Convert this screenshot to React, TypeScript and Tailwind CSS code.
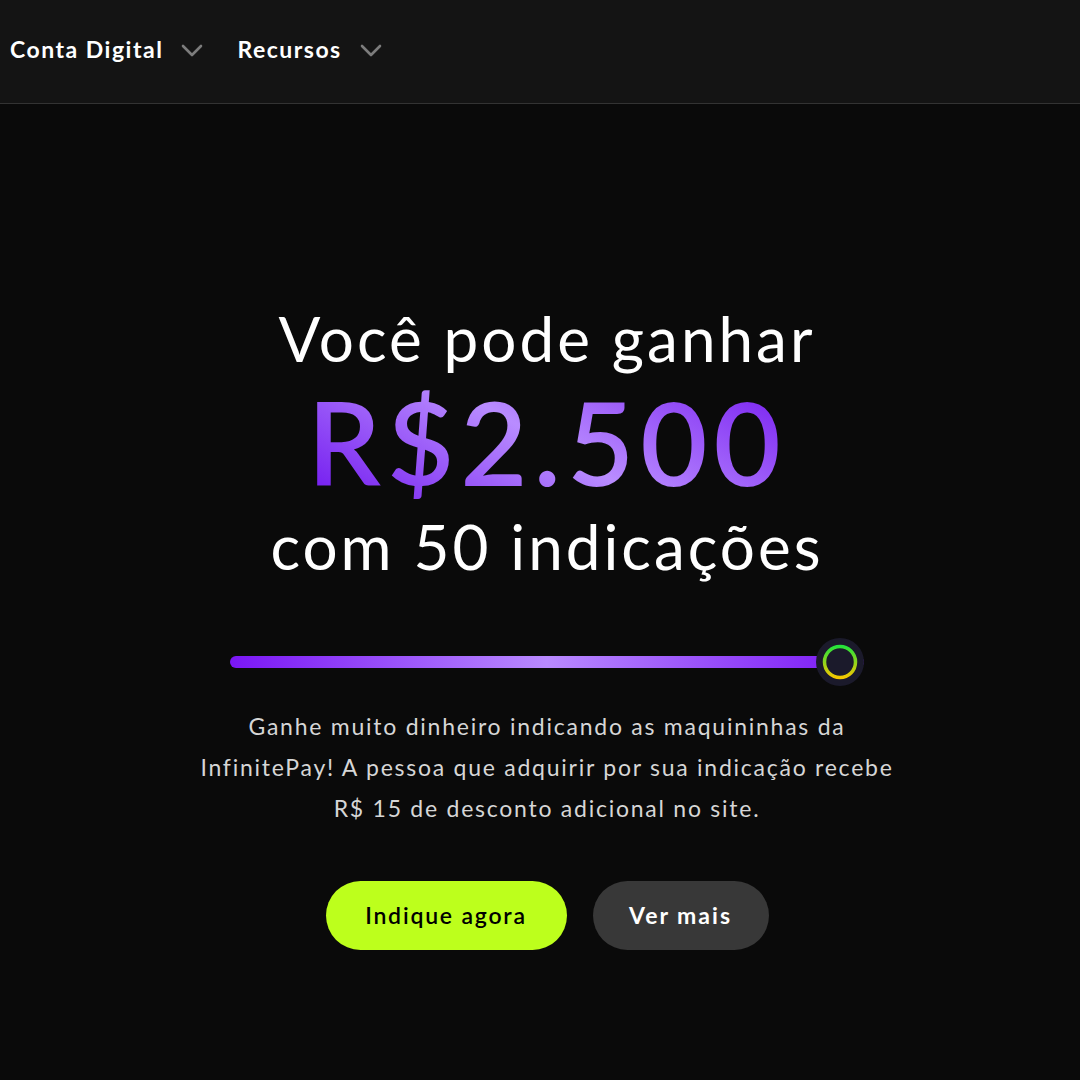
const font = { fontFamily: "Lato, 'Noto Sans', sans-serif" };

function NavItem({ label }: { label: string }) {
  return (
    <button className="flex items-center gap-[18px] text-[23px] font-bold tracking-[1.5px] text-white">
      {label}
      <svg width="22" height="14" viewBox="0 0 22 14" className="mt-[2px]">
        <polyline points="2,2 11,11 20,2" fill="none" stroke="#7c7c7c" strokeWidth="2.6" strokeLinecap="round" strokeLinejoin="round" />
      </svg>
    </button>
  );
}

export default function App() {
  return (
    <div className="min-h-[1080px] bg-[#0a0a0a]" style={font}>
      {/* top nav */}
      <header className="flex h-[104px] items-center gap-[34px] border-b border-[#333333] bg-[#141414] pb-[4px] pl-[10px]">
        <NavItem label="Conta Digital" />
        <NavItem label="Recursos" />
      </header>

      <main className="flex flex-col items-center pl-[14px] pt-[196px]">
        <h1 className="flex flex-col items-center text-white">
          <span className="text-[62px] leading-[76px] font-normal tracking-[3px]">Você pode ganhar</span>
          <span className="bg-[linear-gradient(30deg,#6d12ee_0%,#b98cff_50%,#7418f0_100%)] bg-clip-text text-[116px] leading-[132px] font-semibold tracking-[6px] text-transparent">
            R$2.500
          </span>
          <span className="text-[62px] leading-[76px] font-normal tracking-[3px]">com 50 indicações</span>
        </h1>

        {/* slider */}
        <div className="relative mt-[58px] flex h-[40px] w-[634px] items-center">
          <div className="h-[12px] w-full rounded-full bg-[linear-gradient(90deg,#7a16f5_0%,#b98aff_50%,#7a16f5_100%)]" />
          <div className="absolute right-0 top-1/2 flex h-[48px] w-[48px] -translate-y-1/2 items-center justify-center rounded-full bg-[#1b1a2b]">
            <svg width="36" height="36" viewBox="0 0 36 36">
              <defs>
                <linearGradient id="ring" x1="0" y1="0" x2="0" y2="1">
                  <stop offset="0%" stopColor="#26e33a" />
                  <stop offset="100%" stopColor="#f4c800" />
                </linearGradient>
              </defs>
              <circle cx="18" cy="18" r="15.5" fill="none" stroke="url(#ring)" strokeWidth="3.5" />
            </svg>
          </div>
        </div>

        <p className="mt-[24px] text-center text-[23px] leading-[41px] tracking-[1.75px] text-[#d6d6d6]">
          Ganhe muito dinheiro indicando as maquininhas da
          <br />
          InfinitePay! A pessoa que adquirir por sua indicação recebe
          <br />
          R$ 15 de desconto adicional no site.
        </p>

        <div className="mt-[52px] flex gap-[26px]">
          <button className="h-[69px] w-[241px] rounded-full bg-[#bdff1c] text-[23px] font-semibold tracking-[1.8px] text-black">
            Indique agora
          </button>
          <button className="h-[69px] w-[176px] rounded-full bg-[#383838] text-[23px] font-bold tracking-[2px] text-white">
            Ver mais
          </button>
        </div>
      </main>
    </div>
  );
}
